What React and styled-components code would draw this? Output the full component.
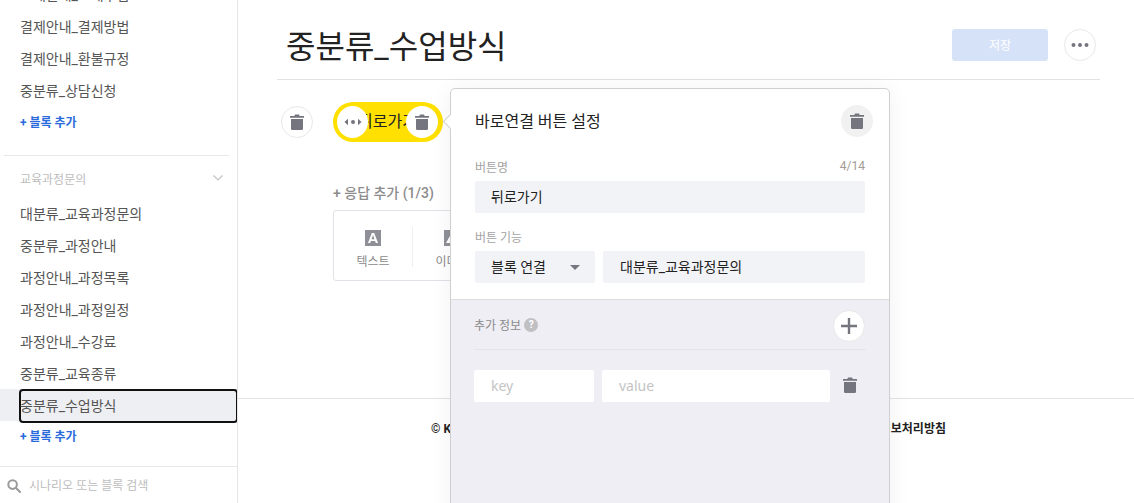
import React from "react";
import styled, { createGlobalStyle } from "styled-components";

const Global = createGlobalStyle`
  html, body { margin: 0; padding: 0; height: 100%; overflow: hidden; background: #fff; }
  body { font-family: Roboto, "Noto Sans CJK KR", sans-serif; color: #222; }
  #root { height: 100%; }
  * { box-sizing: border-box; }
`;

const Page = styled.div`
  position: relative;
  display: flex;
  width: 1134px;
  height: 503px;
  overflow: hidden;
`;
const Sidebar = styled.aside`
  width: 238px;
  flex: none;
  display: flex;
  flex-direction: column;
  border-right: 1px solid #e6e6e6;
`;
const SideScroll = styled.div`
  flex: 1;
  min-height: 0;
  overflow: hidden;
`;
const Group = styled.div`
  margin-top: ${p => p.$top || 0}px;
`;
const Item = styled.div`
  height: 32px;
  line-height: 32px;
  font-size: 14px;
  color: #555;
  padding-left: 20px;
  background: ${p => (p.$active ? "#eeeff2" : "transparent")};
`;
const ActiveLabel = styled.div`
  height: 34px;
  margin: -1px -1px -1px -1px;
  line-height: 30px;
  text-indent: -1px;
  border: 2px solid #111;
  border-radius: 4px;
`;
const AddBlock = styled.div`
  height: 28px;
  line-height: 32px;
  padding-left: 20px;
  font-size: 12px;
  font-weight: 700;
  color: #2a6bdc;
`;
const SideDivider = styled.div`
  height: 1px;
  margin: 20px 8px 0 4px;
  background: #e8e8e8;
`;
const GroupHead = styled.div`
  height: 42px;
  display: flex;
  align-items: center;
  justify-content: space-between;
  padding: 2px 14px 0 20px;
  font-size: 12px;
  color: #bcbcbc;
`;
const SearchBar = styled.div`
  height: 37px;
  flex: none;
  display: flex;
  align-items: center;
  gap: 8px;
  padding: 0 0 2px 7px;
  border-top: 1px solid #e8e8e8;
  font-size: 12px;
  color: #bdbdbd;
`;
const SearchGlyph = styled.svg`
  margin-top: 4px;
  flex: none;
`;
const Main = styled.main`
  flex: 1;
  min-width: 0;
  display: flex;
  flex-direction: column;
`;
const Content = styled.div`
  height: 398px;
  flex: none;
  padding: 0 34px 0 39px;
`;
const Header = styled.header`
  height: 80px;
  display: flex;
  align-items: flex-start;
  justify-content: space-between;
  border-bottom: 1px solid #e2e2e2;
  padding: 0 4px 0 9px;
`;
const Title = styled.h1`
  margin: 0;
  font-size: 32px;
  line-height: 94px;
  height: 79px;
  font-weight: 400;
  color: #222;
`;
const HeaderActions = styled.div`
  display: flex;
  align-items: center;
  gap: 16px;
  margin-top: 29px;
`;
const SaveButton = styled.button`
  width: 96px;
  height: 32px;
  border: 0;
  border-radius: 3px;
  background: #d6e2f8;
  color: #fff;
  font: inherit;
  font-size: 12px;
  padding: 0 0 2px;
`;
const RoundButton = styled.button`
  width: 32px;
  height: 32px;
  padding: 0;
  flex: none;
  border-radius: 50%;
  display: flex;
  align-items: center;
  justify-content: center;
  background: ${p => p.$bg || "#fff"};
  border: ${p => (p.$plain ? "0" : "1px solid #e8e8e8")};
`;
const BlockRow = styled.div`
  display: flex;
  align-items: flex-start;
  gap: 20px;
  margin: 22px 0 0 4px;
`;
const DeleteSlot = styled.div`
  padding-top: 4px;
`;
const Pill = styled.div`
  position: relative;
  width: 110px;
  height: 40px;
  border-radius: 20px;
  background: #ffe000;
  font-size: 16px;
  line-height: 40px;
  padding-right: 1px;
  text-align: center;
  color: #222;
  white-space: nowrap;
  overflow: hidden;
`;
const PillHandle = styled.span`
  position: absolute;
  top: 4px;
  ${p => (p.$right ? "right: 5px;" : "left: 4px;")}
  width: ${p => (p.$right ? 32 : 31)}px;
  height: 32px;
  border-radius: 50%;
  background: #fff;
  display: flex;
  align-items: center;
  justify-content: center;
`;
const Responses = styled.div`
  margin: 42px 0 0 56px;
`;
const ResponseTitle = styled.div`
  height: 18px;
  line-height: 18px;
  font-size: 14px;
  font-weight: 500;
  color: #8c8c8c;
`;
const TypeCard = styled.div`
  display: flex;
  width: 320px;
  height: 71px;
  margin-top: 8px;
  border: 1px solid #e1e1e7;
  border-radius: 3px;
  align-items: center;
`;
const TypeItem = styled.div`
  width: 79px;
  height: 40px;
  margin-top: 3px;
  padding-top: 3px;
  display: flex;
  flex-direction: column;
  align-items: center;
  gap: 8px;
  font-size: 12px;
  line-height: 16px;
  color: #8a8a8a;
  border-right: 1px solid #eeeeee;

  & > svg {
    flex: none;
  }
`;
const Footer = styled.footer`
  flex: 1;
  border-top: 1px solid #e2e2e2;
  display: flex;
  justify-content: center;
  padding: 21px 0 0 5px;
`;
const FooterInner = styled.div`
  width: 515px;
  display: flex;
  justify-content: space-between;
  font-size: 12px;
  font-weight: 700;
  line-height: 18px;
  color: #222;
`;
const Popover = styled.section`
  position: absolute;
  left: 450px;
  top: 88px;
  width: 440px;
  height: 440px;
  border: 1px solid #cfcfcf;
  border-radius: 5px;
  background: #fff;
  box-shadow: 0 2px 24px rgba(0, 0, 0, 0.06);
`;
const Arrow = styled.span`
  position: absolute;
  left: -6px;
  top: 27px;
  width: 11px;
  height: 11px;
  background: #fff;
  border-left: 1px solid #cfcfcf;
  border-bottom: 1px solid #cfcfcf;
  transform: rotate(45deg);
`;
const PopTop = styled.div`
  height: 211px;
  padding: 16px 24px 0;
  border-bottom: 1px solid #dedede;
`;
const PopHead = styled.div`
  display: flex;
  align-items: center;
  justify-content: space-between;
  height: 32px;
  margin-right: -8px;
`;
const PopTitle = styled.div`
  font-size: 16px;
  color: #222;
  padding-bottom: 2px;
`;
const LabelRow = styled.div`
  display: flex;
  justify-content: space-between;
  align-items: center;
  margin-top: ${p => p.$top}px;
  height: 18px;
  padding-bottom: 2px;
  margin-bottom: 5px;
  font-size: 12px;
  color: #a3a3a3;
`;
const Counter = styled.span`
  font-size: 12px;
  color: #a39b94;
`;
const Field = styled.div`
  height: 32px;
  line-height: 32px;
  padding-left: ${p => p.$pad || 16}px;
  font-size: 14px;
  color: #222;
  background: ${p => p.$bg || "#f2f3f7"};
  border-radius: 2px;
  width: ${p => (p.$w ? `${p.$w}px` : "auto")};
  flex: ${p => (p.$w ? "none" : "1")};
`;
const Placeholder = styled(Field)`
  font-family: "Noto Sans", sans-serif;
  color: #c4c4c4;
  font-size: 14px;
  padding-left: 17px;
`;
const SelectField = styled(Field)`
  display: flex;
  align-items: center;
  justify-content: space-between;
  padding-right: 15px;
`;
const Caret = styled.span`
  width: 0;
  height: 0;
  border-left: 5px solid transparent;
  border-right: 5px solid transparent;
  border-top: 5px solid #75767f;
`;
const FieldRow = styled.div`
  display: flex;
  gap: 8px;
  align-items: center;
`;
const PopBottom = styled.div`
  height: 228px;
  background: #eeeef4;
  padding: 10px 23px 0;
  border-radius: 0 0 4px 4px;
`;
const ExtraHead = styled.div`
  display: flex;
  align-items: center;
  justify-content: space-between;
  height: 40px;
  padding: 0 1px 7px 0;
  border-bottom: 1px solid #e3e3e8;
`;
const ExtraLabel = styled.div`
  display: flex;
  align-items: center;
  gap: 3px;
  font-size: 12px;
  color: #8b8b8b;
  margin-top: -3px;
`;
const Help = styled.span`
  width: 14px;
  height: 14px;
  border-radius: 50%;
  background: #c0c0c4;
  color: #fff;
  font-size: 10px;
  font-weight: 700;
  line-height: 14px;
  text-align: center;
`;
const KeyRow = styled(FieldRow)`
  margin-top: 20px;
`;
const TrashSlot = styled.div`
  margin: -2px 0 0 5px;
  display: flex;
`;

const Trash = () => (
  <svg width="14" height="16" viewBox="0 0 14 16" fill="#74757e">
    <path d="M5 .6h4l.7 1.4H14v1.8H0V2h4.300z" />
    <path d="M1 5h12v9.400c0 .9-.7 1.600-1.600 1.600H2.600C1.700 16 1 15.300 1 14.400z" />
  </svg>
);
const Dots = () => (
  <svg width="18" height="6" viewBox="0 0 18 6" fill="#74757e">
    <circle cx="2.500" cy="3" r="2" />
    <circle cx="9" cy="3" r="2" />
    <circle cx="15.500" cy="3" r="2" />
  </svg>
);
const MoveIcon = () => (
  <svg width="18" height="8" viewBox="0 0 18 8" fill="#74757e">
    <path d="M0.500 4 4 0.800v6.400z" />
    <circle cx="9" cy="4" r="2" />
    <path d="M17.500 4 14 0.800v6.400z" />
  </svg>
);
const Plus = () => (
  <svg width="16" height="16" viewBox="0 0 16 16" fill="#74757e">
    <path d="M6.800 0h2.400v6.800H16v2.400H9.200V16H6.800V9.200H0V6.800h6.800z" />
  </svg>
);
const Chevron = () => (
  <svg width="10" height="6" viewBox="0 0 10 6" fill="none" stroke="#c4c4c4" strokeWidth="1.200">
    <path d="M.5.5 5 5 9.500.5" />
  </svg>
);
const Search = () => (
  <SearchGlyph width="14" height="14" viewBox="0 0 14 14" fill="none" stroke="#9a9a9a" strokeWidth="2">
    <circle cx="5.600" cy="5.600" r="4.300" />
    <path d="M8.800 8.800 13 13" strokeLinecap="round" />
  </SearchGlyph>
);
const TextTypeIcon = () => (
  <svg width="16" height="16" viewBox="0 0 16 16">
    <rect width="16" height="16" fill="#8f9097" />
    <path
      fillRule="evenodd"
      d="M6.800 3h2.400L13 13h-2.200l-.7-2H5.900l-.7 2H3zM6.500 9.200h3L8 5z"
      fill="#fff"
    />
  </svg>
);
const ImageTypeIcon = () => (
  <svg width="16" height="16" viewBox="0 0 16 16">
    <rect width="16" height="16" fill="#8f9097" />
    <path d="M2 13 6.500 5l3 5 1.500-2 3 5z" fill="#fff" />
  </svg>
);

const groupOne = ["교재안내_교재구입", "결제안내_결제방법", "결제안내_환불규정", "중분류_상담신청"];
const groupTwo = [
  "대분류_교육과정문의",
  "중분류_과정안내",
  "과정안내_과정목록",
  "과정안내_과정일정",
  "과정안내_수강료",
  "중분류_교육종류",
];

export default function App() {
  return (
    <Page>
      <Global />
      <Sidebar>
        <SideScroll>
          <Group $top={-21}>
            {groupOne.map(t => (
              <Item key={t}>{t}</Item>
            ))}
            <AddBlock>+ 블록 추가</AddBlock>
          </Group>
          <SideDivider />
          <GroupHead>
            교육과정문의
            <Chevron />
          </GroupHead>
          <Group>
            {groupTwo.map(t => (
              <Item key={t}>{t}</Item>
            ))}
            <Item $active>
              <ActiveLabel>중분류_수업방식</ActiveLabel>
            </Item>
            <AddBlock>+ 블록 추가</AddBlock>
          </Group>
        </SideScroll>
        <SearchBar>
          <Search />
          시나리오 또는 블록 검색
        </SearchBar>
      </Sidebar>

      <Main>
        <Content>
          <Header>
            <Title>중분류_수업방식</Title>
            <HeaderActions>
              <SaveButton>저장</SaveButton>
              <RoundButton>
                <Dots />
              </RoundButton>
            </HeaderActions>
          </Header>
          <BlockRow>
            <DeleteSlot>
              <RoundButton>
                <Trash />
              </RoundButton>
            </DeleteSlot>
            <Pill>
              뒤로가기
              <PillHandle>
                <MoveIcon />
              </PillHandle>
              <PillHandle $right>
                <Trash />
              </PillHandle>
            </Pill>
          </BlockRow>
          <Responses>
            <ResponseTitle>+ 응답 추가 (1/3)</ResponseTitle>
            <TypeCard>
              <TypeItem>
                <TextTypeIcon />
                텍스트
              </TypeItem>
              <TypeItem>
                <ImageTypeIcon />
                이미지
              </TypeItem>
            </TypeCard>
          </Responses>
        </Content>
        <Footer>
          <FooterInner>
            <span>© Kakao Corp.</span>
            <span>개인정보처리방침</span>
          </FooterInner>
        </Footer>
      </Main>

      <Popover>
        <Arrow />
        <PopTop>
          <PopHead>
            <PopTitle>바로연결 버튼 설정</PopTitle>
            <RoundButton $plain $bg="#f1f1f1">
              <Trash />
            </RoundButton>
          </PopHead>
          <LabelRow $top={21}>
            버튼명
            <Counter>4/14</Counter>
          </LabelRow>
          <Field>뒤로가기</Field>
          <LabelRow $top={15}>버튼 기능</LabelRow>
          <FieldRow>
            <SelectField $w={120}>
              블록 연결
              <Caret />
            </SelectField>
            <Field $pad={17}>대분류_교육과정문의</Field>
          </FieldRow>
        </PopTop>
        <PopBottom>
          <ExtraHead>
            <ExtraLabel>
              추가 정보
              <Help>?</Help>
            </ExtraLabel>
            <RoundButton>
              <Plus />
            </RoundButton>
          </ExtraHead>
          <KeyRow>
            <Placeholder $bg="#fff" $w={120}>key</Placeholder>
            <Placeholder $bg="#fff" $w={228}>value</Placeholder>
            <TrashSlot>
              <Trash />
            </TrashSlot>
          </KeyRow>
        </PopBottom>
      </Popover>
    </Page>
  );
}
